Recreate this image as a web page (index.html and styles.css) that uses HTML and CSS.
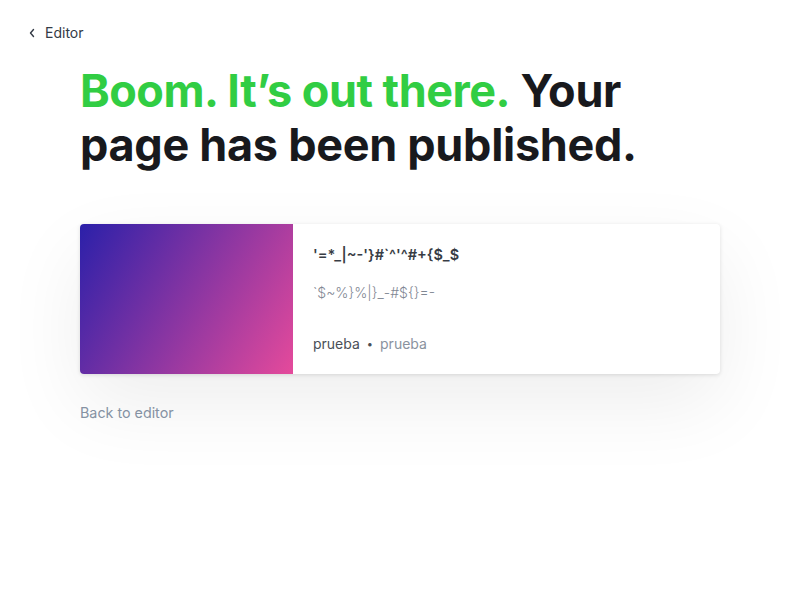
FILE: index.html
```html
<!DOCTYPE html>
<html>
<head>
<meta charset="utf-8">
<link rel="stylesheet" href="styles.css">
</head>
<body>
<div class="page">
  <a class="back-top" href="#">
    <svg class="chev" width="8" height="10" viewBox="0 0 8 10"><path d="M5.5 1.5 L2.5 5 L5.5 8.5" fill="none" stroke="#333a45" stroke-width="1.4" stroke-linecap="round" stroke-linejoin="round"/></svg>
    <span>Editor</span>
  </a>
  <main class="main">
    <h1 class="headline"><span class="green">Boom. It’s out there.</span> Your page has been published.</h1>
    <div class="card">
      <div class="thumb"></div>
      <div class="info">
        <div class="title">'=*_|~-'}#`^'^#+{$_$</div>
        <div class="desc">`$~%}%|}_-#${}=-</div>
        <div class="meta"><span class="author">prueba</span><span class="dot">•</span><span class="site">prueba</span></div>
      </div>
    </div>
    <a class="back-link" href="#">Back to editor</a>
  </main>
</div>
</body>
</html>
```
FILE: styles.css
```css
html, body { margin: 0; padding: 0; background: #fff; }
body { font-family: Inter, "Noto Sans", sans-serif; color: #1a1b1f; }
.page { width: 800px; height: 600px; overflow: hidden; }
.back-top {
  display: flex; align-items: center; gap: 9px;
  padding: 24px 0 0 28px;
  font-size: 14px; color: #333a45; text-decoration: none;
  line-height: 18px;
}
.chev { display: block; }
.main { padding: 22px 80px 0 80px; }
.headline {
  margin: 0; font-size: 45px; line-height: 54px; font-weight: 700;
  letter-spacing: -0.3px; width: 580px; color: #18191d;
}
.green { color: #31cd43; letter-spacing: -0.5px; }
.card {
  margin-top: 52px; display: flex; height: 150px; border-radius: 4px;
  background: #fff; overflow: hidden;
  box-shadow: 0 1px 4px rgba(0,0,0,0.12), 0 30px 80px rgba(0,0,0,0.07);
}
.thumb { width: 213px; flex: none; background: linear-gradient(121deg, #2b20a9 0%, #e54a9b 100%); }
.info { padding: 21px 20px 20px; display: flex; flex-direction: column; }
.title { font-size: 14.5px; font-weight: 600; color: #373c44; line-height: 20px; }
.desc { margin-top: 18px; font-size: 14px; font-weight: 300; color: #7f8793; line-height: 20px; }
.meta { margin-top: auto; font-size: 14px; line-height: 20px; display: flex; align-items: center; gap: 7px; color: #4a4f57; padding-bottom: 0; }
.dot { font-size: 11px; color: #4a4f57; }
.site { color: #8a929e; }
.back-link { display: inline-block; margin-top: 29px; font-size: 14.3px; color: #8592a3; text-decoration: none; line-height: 20px; }
```
